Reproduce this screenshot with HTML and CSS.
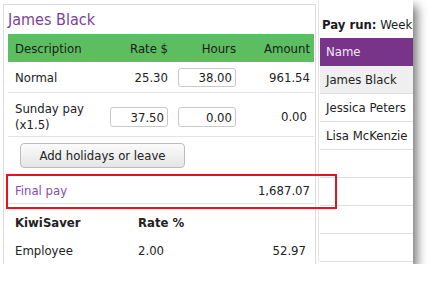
FILE: index.html
```html
<!DOCTYPE html>
<html lang="en">
<head>
  <meta charset="UTF-8" />
  <title>Pay run - James Black</title>
  <link rel="stylesheet" href="styles.css">
</head>
<body>
  <div class="shot">
    <div class="pane">
      <h2 class="title">James Black</h2>

      <div class="line head">
        <span class="desc">Description</span>
        <span>Rate $</span>
        <span>Hours</span>
        <span>Amount</span>
      </div>
      <div class="line normal">
        <span class="desc">Normal</span>
        <span>25.30</span>
        <span><input class="num" value="38.00"></span>
        <span>961.54</span>
      </div>
      <div class="line sunday">
        <span class="desc">Sunday pay<br>(x1.5)</span>
        <span><input class="num" value="37.50"></span>
        <span><input class="num" value="0.00"></span>
        <span class="zero">0.00</span>
      </div>

      <div class="actions">
        <button class="btn">Add holidays or leave</button>
      </div>

      <div class="total">
        <span>Final pay</span>
        <span>1,687.07</span>
      </div>

      <div class="kiwi">
        <div class="kiwi-row bold">
          <span>KiwiSaver</span>
          <span>Rate %</span>
          <span></span>
        </div>
        <div class="kiwi-row">
          <span>Employee</span>
          <span>2.00</span>
          <span class="amt">52.97</span>
        </div>
      </div>
    </div>

    <div class="runs">
      <div class="run-title"><b>Pay run:</b> Weekly</div>
      <div class="emp head">Name</div>
      <div class="emp current">James Black</div>
      <div class="emp">Jessica Peters</div>
      <div class="emp">Lisa McKenzie</div>
      <div class="emp"></div>
      <div class="emp"></div>
      <div class="emp"></div>
      <div class="emp"></div>
    </div>

    <!-- highlight drawn over the final pay row -->
    <div class="callout"></div>
  </div>
</body>
</html>
```

FILE: styles.css
```css
body {
  margin: 0;
  background: #fff;
  font-family: "DejaVu Sans Condensed", "DejaVu Sans", sans-serif;
  font-stretch: condensed;
  font-size: 13px;
  color: #222;
}
.shot {
  position: relative;
  display: flex;
  align-items: flex-start;
  width: 413px;
  height: 264px;
  overflow: hidden;
  background: #fff;
  box-shadow: 4px 6px 10px rgba(0, 0, 0, 0.55);
}
.pane {
  box-sizing: border-box;
  flex: none;
  width: 313px;
  height: 300px;
  margin: 4px 0 0 3px;
  padding: 0 1px 0 4px;
  border: 1px solid #dcdcdc;
}
.title {
  margin: 0;
  padding-top: 1px;
  height: 28px;
  line-height: 28px;
  font-size: 16px;
  font-weight: normal;
  color: #7b3f98;
}
.line {
  display: grid;
  grid-template-columns: 97px 67px 68px 74px;
  align-items: center;
  border-bottom: 1px solid #e2e2e2;
}
.line span {
  text-align: right;
  padding-right: 4px;
}
.line .desc {
  text-align: left;
  padding-left: 7px;
}
.line .zero {
  padding-right: 7px;
}
.line.head {
  height: 28px;
  background: #5cbe60;
  border-bottom: none;
  color: #1b1b1b;
}
.line.normal {
  height: 30px;
}
.line.sunday {
  padding: 7px 0 3px;
  line-height: 16px;
}
.line.sunday span {
  padding-top: 1px;
}
.num {
  box-sizing: border-box;
  width: 58px;
  height: 19px;
  padding: 0 3px;
  border: 1px solid #c9c9c9;
  border-radius: 3px;
  font: inherit;
  color: #222;
  text-align: right;
  vertical-align: middle;
}
.sunday .num {
  height: 20px;
}
.actions {
  padding: 6px 0 6px 12px;
}
.btn {
  display: block;
  box-sizing: border-box;
  width: 165px;
  height: 25px;
  background: linear-gradient(#fbfbfb, #e5e5e5);
  border: 1px solid #bcbcbc;
  border-radius: 4px;
  font: inherit;
  color: #222;
}
.total {
  display: flex;
  justify-content: space-between;
  padding: 9px 4px 4px 7px;
  line-height: 16px;
  border-bottom: 1px solid #e2e2e2;
  color: #8a4cab;
}
.total span:last-child {
  color: #222;
}
.kiwi {
  padding-top: 5px;
}
.kiwi-row {
  display: grid;
  grid-template-columns: 123px 1fr 1fr;
  padding: 6px 0;
  line-height: 16px;
}
.kiwi-row span {
  padding-left: 7px;
}
.kiwi-row .amt {
  text-align: right;
  padding-right: 8px;
}
.bold {
  font-weight: bold;
}
.runs {
  flex: none;
  width: 94px;
  margin-left: 2px;
  padding-left: 1px;
  border-left: 1px solid #e6e6e6;
  white-space: nowrap;
  overflow: hidden;
}
.run-title {
  padding: 17px 0 5px 2px;
  line-height: 16px;
  color: #1b1b1b;
}
.emp {
  box-sizing: border-box;
  height: 28px;
  line-height: 27px;
  padding-left: 6px;
  border-bottom: 1px solid #dedede;
}
.emp.head {
  background: #783488;
  color: #f2eaf5;
  border-bottom: none;
}
.emp.current {
  background: #efefef;
}
.callout {
  position: absolute;
  left: 6px;
  top: 174px;
  width: 331px;
  height: 35px;
  box-sizing: border-box;
  border: 2px solid #e8141b;
}
```
